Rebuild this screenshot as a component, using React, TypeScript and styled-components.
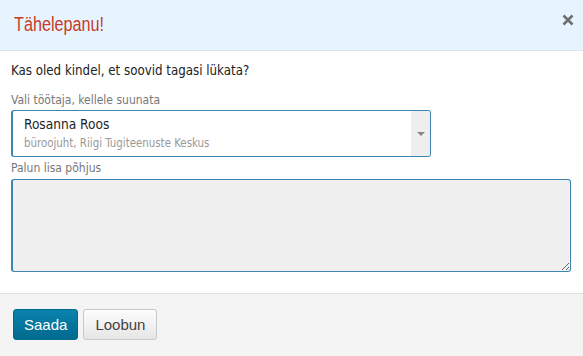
import React from "react";
import styled, { createGlobalStyle } from "styled-components";

const GlobalStyle = createGlobalStyle`
  html, body {
    margin: 0;
    padding: 0;
    background: #fff;
  }
  body {
    font-family: "DejaVu Sans Condensed", "DejaVu Sans", sans-serif;
    font-size: 13px;
    color: #222;
  }
`;

const Modal = styled.div`
  width: 583px;
  height: 356px;
  display: flex;
  flex-direction: column;
  background: #fff;
`;

const Header = styled.header`
  height: 51px;
  box-sizing: border-box;
  background: #e6f4fd;
  border-bottom: 1px solid #dde3e8;
  display: flex;
  align-items: center;
  justify-content: space-between;
  padding: 0 8px 2px 14px;
`;

// narrow face: Arial Narrow is not installed, so Liberation Sans is squeezed
const Title = styled.h4`
  margin: 0;
  font-family: "Liberation Sans", Arial, sans-serif;
  font-weight: normal;
  font-size: 20px;
  color: #c63b2d;
  transform: scaleX(0.81);
  transform-origin: left center;
`;

const CloseButton = styled.button`
  border: none;
  background: none;
  padding: 0;
  width: 14px;
  height: 14px;
  cursor: pointer;
  display: flex;
  align-items: center;
  justify-content: center;
  margin-bottom: 9px;
`;

const Body = styled.div`
  flex: 1;
  padding: 12px 11px 0 11px;
  display: flex;
  flex-direction: column;
`;

const Question = styled.p`
  margin: 0 0 15px 0;
  font-size: 13.2px;
  line-height: 15px;
  color: #222;
`;

const Label = styled.label`
  display: block;
  font-size: 12px;
  line-height: 14px;
  color: #777;
  margin-bottom: 3px;
`;

const Select = styled.div`
  width: 420px;
  height: 47px;
  box-sizing: border-box;
  border: 1px solid #3c87b0;
  border-left-width: 2px;
  border-radius: 3px;
  display: flex;
  overflow: hidden;
  margin-bottom: 4px;
`;

const SelectValue = styled.div`
  flex: 1;
  padding: 6px 11px;
  display: flex;
  flex-direction: column;
  gap: 4px;
`;

const Name = styled.span`
  font-size: 13.6px;
  line-height: 15px;
  color: #222;
`;

const Position = styled.span`
  font-size: 11.4px;
  line-height: 14px;
  color: #999;
`;

const Caret = styled.div`
  width: 19px;
  background: #eee;
  display: flex;
  align-items: center;
  justify-content: center;

  &::after {
    content: "";
    border-left: 4px solid transparent;
    border-right: 4px solid transparent;
    border-top: 4px solid #888;
  }
`;

const TextArea = styled.textarea`
  width: 560px;
  height: 93px;
  margin-top: 1px;
  box-sizing: border-box;
  background: #f0f0f0;
  border: 1px solid #3c87b0;
  border-left-width: 2px;
  border-radius: 3px;
  font-family: inherit;
  font-size: 13px;
  outline: none;
  resize: vertical;
`;

const Footer = styled.footer`
  height: 63px;
  box-sizing: border-box;
  background: #f4f4f4;
  border-top: 1px solid #e0e0e0;
  display: flex;
  align-items: flex-start;
  gap: 5px;
  padding: 15px 13px 0 13px;
`;

const Button = styled.button<{ $primary?: boolean }>`
  height: 31px;
  padding: 0 ${(p) => (p.$primary ? "10px" : "11px")};
  border-radius: 3px;
  font-family: "Liberation Sans", Arial, sans-serif;
  font-size: 15px;
  cursor: pointer;
  border: 1px solid ${(p) => (p.$primary ? "#046a8c" : "#c8c8c8")};
  color: ${(p) => (p.$primary ? "#fff" : "#444")};
  background: ${(p) =>
    p.$primary
      ? "linear-gradient(#0a83ad, #006a8f)"
      : "linear-gradient(#fdfdfd, #e6e6e6)"};
`;

export default function App() {
  return (
    <>
      <GlobalStyle />
      <Modal>
        <Header>
          <Title>Tähelepanu!</Title>
          <CloseButton aria-label="Sulge">
            <svg width="12" height="12" viewBox="0 0 12 12">
              <path
                d="M1.5 1.5 L10.5 10.5 M10.5 1.5 L1.5 10.5"
                stroke="#6f6f6f"
                strokeWidth="2.6"
              />
            </svg>
          </CloseButton>
        </Header>
        <Body>
          <Question>Kas oled kindel, et soovid tagasi lükata?</Question>
          <Label>Vali töötaja, kellele suunata</Label>
          <Select>
            <SelectValue>
              <Name>Rosanna Roos</Name>
              <Position>büroojuht, Riigi Tugiteenuste Keskus</Position>
            </SelectValue>
            <Caret />
          </Select>
          <Label>Palun lisa põhjus</Label>
          <TextArea />
        </Body>
        <Footer>
          <Button $primary>Saada</Button>
          <Button>Loobun</Button>
        </Footer>
      </Modal>
    </>
  );
}
